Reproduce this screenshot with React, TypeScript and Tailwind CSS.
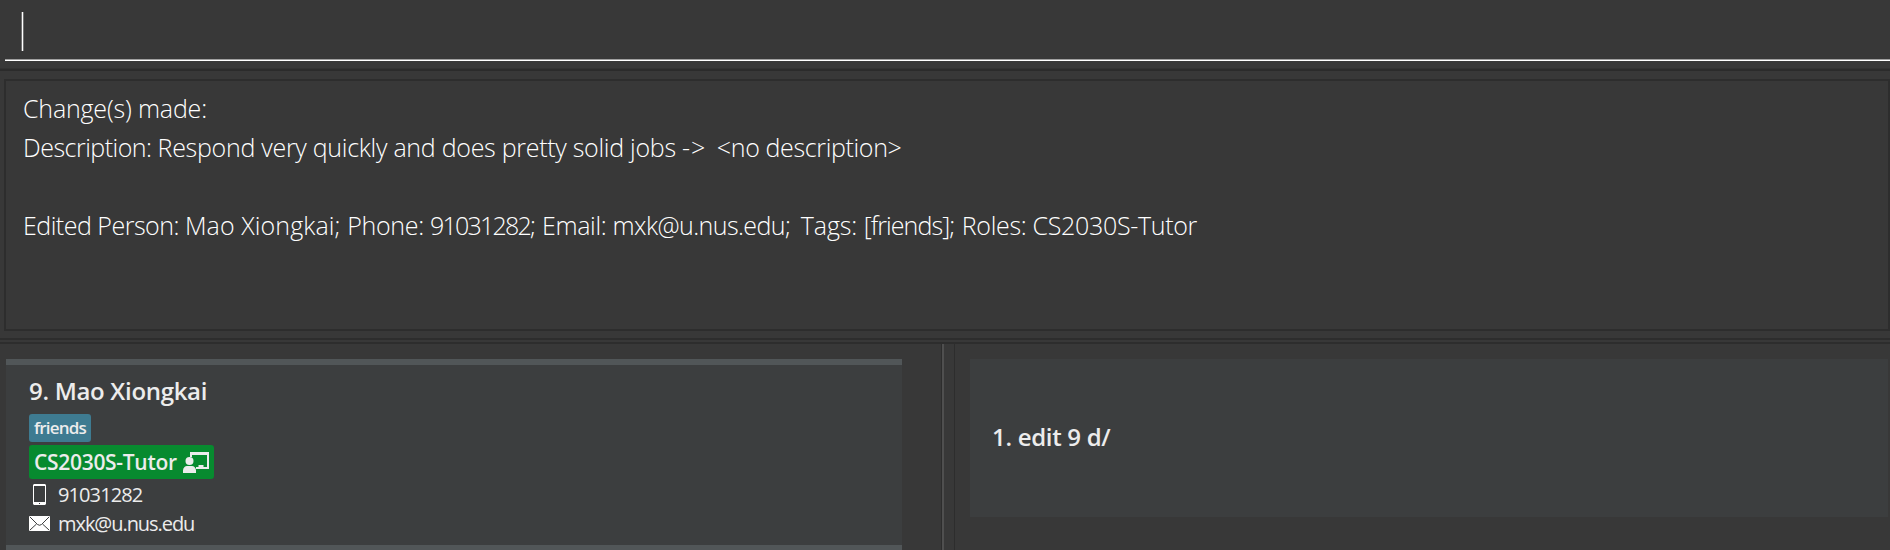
function PhoneIcon() {
  return (
    <svg width="13" height="21" viewBox="0 0 13 21" className="ml-1 mr-3 shrink-0">
      <path fill="#fff" fillRule="evenodd" d="M1 0h11l1 1v19l-1 1H1l-1-1V1zM1 2v16h11V2zM6 19v1h1v-1z" />
    </svg>
  );
}

function MailIcon() {
  return (
    <svg width="21" height="15" viewBox="0 0 21 15" className="mr-2 shrink-0">
      <rect width="21" height="15" rx="1" fill="#fff" />
      <path fill="none" stroke="#3c3e3f" d="M1 1l7.500 7.500q2 1.500 4 0L20 1M1 14l6.500-6M20 14l-6.500-6" />
    </svg>
  );
}

function TutorIcon() {
  return (
    <svg width="26" height="21" viewBox="0 0 26 21" className="ml-1.5 shrink-0" fill="#ececec">
      <path d="M7 0h19v17H13v-2h2.500v-2h5v2H24V3H9v2H7z" />
      <circle cx="6.500" cy="9" r="4" />
      <path d="M0 21v-3q1-4 4-4h5q3 0 4 4v3z" />
    </svg>
  );
}

export default function App() {
  return (
    <div className="flex h-[550px] w-[1890px] flex-col overflow-hidden bg-[#383838] font-['Open_Sans',sans-serif] text-white">
      <header className="h-[68px] shrink-0 pl-[5px]">
        <div className="h-[60px] border-b border-[#a0a0a0] pl-4 pt-3">
          <div className="h-[39px] w-[3px] border-x border-[#707070] bg-white" />
        </div>
        <div className="h-px bg-white" />
      </header>
      <div className="h-[3px] shrink-0 border-t border-[#323232] bg-[#2b2b2b]" />

      <section className="ml-1 mt-2 h-[252px] shrink-0 whitespace-pre border-2 border-[#2d2d2d] pl-[17px] pt-2 text-[25px] font-light leading-[39px]">
        <p className="tracking-[-0.18px]">Change(s) made:</p>
        <p className="tracking-[-0.35px]">
          <span className="tracking-[-0.5px]">Description: </span>
          <span className="tracking-[-0.28px]">Respond very quickly and does pretty solid jobs </span>
          <span className="mr-[3px] tracking-[1px]">{"-> "}</span>
          <span>{"<no description>"}</span>
        </p>
        <p> </p>
        <p>
          <span className="tracking-[-0.5px]">Edited Person: </span>
          <span className="tracking-[0.1px]">Mao Xiongkai; </span>
          <span className="tracking-[-0.33px]">Phone: </span>
          <span className="mr-[3px] tracking-[-1.76px]">91031282; </span>
          <span className="tracking-[-0.33px]">Email: </span>
          <span className="mr-[4.5px] tracking-[-0.58px]">mxk@u.nus.edu; </span>
          <span className="tracking-[-0.1px]">Tags: </span>
          <span className="mr-0.5 tracking-[-0.92px]">[friends]; </span>
          <span className="tracking-[-0.32px]">Roles: CS2030S-Tutor</span>
        </p>
      </section>

      <div className="mt-[7px] h-1.5 shrink-0 border-y-2 border-[#2d2d2d]" />

      <main className="flex flex-1">
        <section className="w-[942px] shrink-0 border-r border-[#2d2d2d] pl-1.5 pt-[15px]">
          <article className="h-[186px] w-[896px] border-t-[6px] border-[#515658] bg-[#3c3e3f] pl-[23px] text-[#ececec]">
            <h2 className="h-[49px] pt-[9px] text-[24px] font-semibold leading-[33px] tracking-[-0.3px]">9. Mao Xiongkai</h2>
            <div className="flex h-7 w-[62px] items-center justify-center rounded-[3px] bg-[#3e7b91] pb-px text-[17px] font-semibold leading-7 tracking-[-0.8px]">friends</div>
            <div className="mt-[3px] flex h-[34px] w-[185px] items-center rounded-[3px] bg-[#078a2f] pl-[5px] text-[21px] font-semibold leading-[34px] tracking-[-0.3px]">
              <span className="w-[143px] whitespace-nowrap">CS2030S-Tutor</span>
              <TutorIcon />
            </div>
            <div className="flex h-[31px] items-center text-[20px] leading-[31px] tracking-[-0.9px]"><PhoneIcon />91031282</div>
            <div className="flex h-[27px] items-center text-[20px] leading-[27px] tracking-[-1.05px]"><MailIcon />mxk@u.nus.edu</div>
          </article>
          <div className="h-[6px] w-[896px] bg-[#515658]" />
        </section>
        <div className="w-3 shrink-0 border-l-2 border-[#4f4f4f]" />
        <section className="flex-1 border-l border-[#2d2d2d] pl-[15px] pr-0.5 pt-[15px]">
          <article className="flex h-[158px] items-center bg-[#3c3e3f] pb-0.5 pl-[22px] text-[24px] font-semibold leading-8 tracking-[-0.3px] text-[#ececec]">1. edit 9 d/</article>
        </section>
      </main>
    </div>
  );
}
